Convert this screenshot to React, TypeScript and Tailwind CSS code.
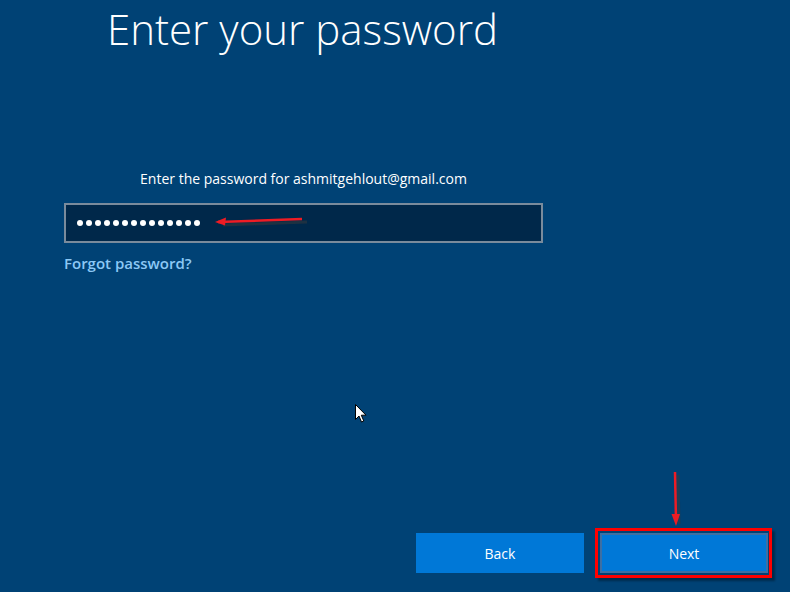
import React from "react";

const font = { fontFamily: '"Open Sans", "Noto Sans", sans-serif' };

function Cursor() {
  return (
    <svg width="13" height="20" viewBox="0 0 13 20" className="absolute left-[355px] top-[404px]">
      <path d="M0.5 0.5 L0.5 15.5 L4 12 L6.5 18 L8.8 17 L6.3 11.2 L11 11.2 Z" fill="#fff" stroke="#000" strokeWidth="1" />
    </svg>
  );
}

function Annotations() {
  return (
    <>
      {/* arrow pointing at the password dots */}
      <svg width="100" height="16" viewBox="0 0 100 16" className="absolute left-[212px] top-[213px]">
        <path d="M8 9 L92 6" stroke="#3a3a3a" strokeOpacity="0.5" strokeWidth="3" transform="translate(3 3)" />
        <path d="M6 9 L90 6" stroke="#ee1c24" strokeWidth="2.5" />
        <path d="M3 9 L14 4.5 L13 12.5 Z" fill="#ee1c24" />
      </svg>
      {/* arrow pointing at next */}
      <svg width="20" height="60" viewBox="0 0 20 60" className="absolute left-[666px] top-[470px]">
        <path d="M10 3 L11 52" stroke="#3a3a3a" strokeOpacity="0.5" strokeWidth="3" transform="translate(2 2)" />
        <path d="M9 2 L10 50" stroke="#ee1c24" strokeWidth="2.5" />
        <path d="M5.5 44 L14 44 L10 56 Z" fill="#ee1c24" />
      </svg>
      <div className="absolute left-[595px] top-[528px] h-[50px] w-[177px] border-[3px] border-[#ff0000] shadow-[3px_3px_2px_rgba(0,0,0,0.35)]" />
    </>
  );
}

export default function App() {
  return (
    <div className="relative flex h-[592px] w-[790px] flex-col overflow-hidden bg-[#004275] text-white" style={font}>
      <h1 className="pl-[107px] pt-[2px] text-[42px] leading-[54px] font-light">Enter your password</h1>

      <div className="mt-[113px] flex w-[543px] flex-col pl-[64px]">
        <p className="text-center text-[14px] leading-[20px]">Enter the password for ashmitgehlout@gmail.com</p>
        <div className="mt-[14px] flex h-[40px] items-center gap-[3px] border-2 border-[#7a8b9c] bg-[#00284a] pl-[11px]">
          {Array.from({ length: 14 }).map((_, i) => (
            <span key={i} className="h-[6px] w-[6px] rounded-full bg-white" />
          ))}
        </div>
        <a className="mt-[10px] text-[15px] leading-[20px] font-semibold text-[#8cc8f5]">Forgot password?</a>
      </div>

      <div className="mt-auto mb-[19px] flex justify-end gap-[16px] pr-[22px]">
        <button className="h-[40px] w-[168px] bg-[#0078d7] text-[14px]">Back</button>
        <button className="h-[40px] w-[168px] border-2 border-[#3d6fa3] bg-[#0078d7] text-[14px]">Next</button>
      </div>

      <Annotations />
      <Cursor />
    </div>
  );
}
